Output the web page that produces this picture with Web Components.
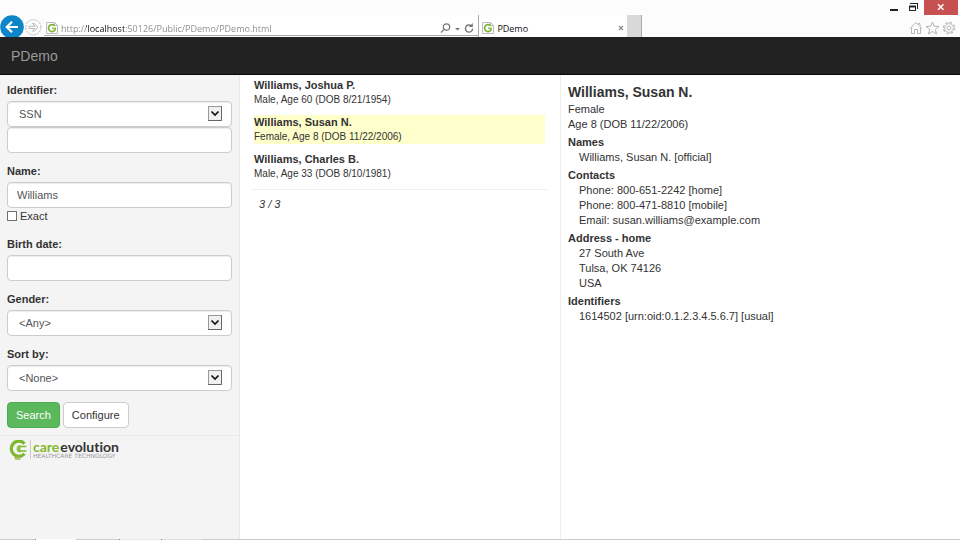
<!DOCTYPE html>
<html lang="en">
<head>
<meta charset="utf-8">
<meta name="viewport" content="width=device-width, initial-scale=1">
<title>PDemo</title>
<style>
  html, body { margin: 0; }
  body { font: 11px/15px "Liberation Sans", Arial, sans-serif; color: #333; background: #fff; }
</style>
</head>
<body>
<demo-app></demo-app>
<script>
function define(name, html) {
  const template = document.createElement('template');
  template.innerHTML = '<style>*,*::before,*::after{box-sizing:border-box}:host{display:block;box-sizing:border-box}</style>' + html;
  customElements.define(name, class extends HTMLElement {
    constructor() {
      super();
      this.attachShadow({ mode: 'open' }).append(template.content.cloneNode(true));
    }
    connectedCallback() {
      const root = this.shadowRoot;
      root.querySelectorAll('[data-text]').forEach(el => {
        el.textContent = this.getAttribute(el.dataset.text) || '';
      });
      const input = root.querySelector('input[data-value]');
      if (input) input.value = this.getAttribute('value') || '';
    }
  });
}

define('site-icon', `
<style>:host{flex:none;width:12px;height:12px}svg{display:block;width:100%;height:100%}</style>
<svg viewBox="0 0 12 12"><path d="M.5.5h8l3 3v8H.5z" fill="#fff" stroke="#bbb"/><path d="M8.5.5v3h3" fill="none" stroke="#bbb"/><path d="M8.6 3.7A3.5 3.5 0 1 0 9.4 7" fill="none" stroke="#7fb434" stroke-width="1.7"/><path d="M6 6.3h4" stroke="#91bd52" stroke-width="1.5"/></svg>`);

define('window-buttons', `
<style>
:host{display:flex;justify-content:flex-end;height:15px}
button{border:0;padding:0;background:none;display:block;height:15px}
svg{display:block}
.min,.max{width:20px}.close{width:34px;background:#c75050;margin-right:2px}
</style>
<button class="min" aria-label="Minimize"><svg width="20" height="15"><path d="M6 10h8" stroke="#222" stroke-width="2"/></svg></button>
<button class="max" aria-label="Restore"><svg width="20" height="15"><path d="M6.500 4V3.500h7v5.500" fill="none" stroke="#222"/><path d="M6 3.500h8" stroke="#222"/><rect x="5.500" y="6.500" width="6" height="4" fill="#fcfcfc" stroke="#222"/><path d="M5 6.500h7" stroke="#222" stroke-width="2"/></svg></button>
<button class="close" aria-label="Close"><svg width="34" height="15"><path d="M14 4.2l5.500 5.500M19.500 4.200L14 9.700" stroke="#fff" stroke-width="1.500"/></svg></button>`);

define('browser-bar', `
<style>
:host{background:#fcfcfc;font-family:"Open Sans","Noto Sans",sans-serif;font-size:9px}
window-buttons{height:15px}
.row{display:flex;height:22px;align-items:stretch}
button{border:0;padding:0;background:none;display:block;flex:none}
svg{display:block}
.row .back{width:24px}.back svg{margin-top:-4px}
.fwd{width:20px}
.address{flex:435 1 0;min-width:0;display:flex;align-items:center;background:#fff;border-bottom:1px solid #aaa;margin-bottom:1px;padding:6px 2px 0}
.address site-icon{margin-right:3px}
input{flex:1;min-width:0;border:0;outline:0;padding:0;height:14px;font:inherit;
  color:transparent;background:linear-gradient(90deg,#8a8a8a 25px,#111 25px 63px,#8a8a8a 63px);-webkit-background-clip:text;background-clip:text}
.tab{flex:0 0 149px;display:flex;align-items:center;gap:3px;padding:4px 0 0 3px;background:#fff;border-left:1px solid #aaa;color:#111}
.tab a{flex:1;color:inherit;text-decoration:none}
.newtab{width:15px;background:#d9d9d9;border-right:1px solid #aaa}
.tools{flex:317 1 0;display:flex;justify-content:flex-end;align-items:center;gap:2px;padding:4px 4px 0 0}
</style>
<window-buttons></window-buttons>
<div class="row">
  <button class="back" aria-label="Back"><svg width="24" height="26" viewBox="0 0 24 26"><circle cx="12" cy="16" r="11.8" fill="#0d86c8"/><path d="M18 16H7M12 10.800L6.800 16l5.200 5.200" fill="none" stroke="#fff" stroke-width="2.200"/></svg></button>
  <button class="fwd" aria-label="Forward"><svg width="20" height="22"><g fill="none" stroke="#b9b9b9"><circle cx="9.300" cy="12.300" r="7.600" stroke-dasharray="2 1"/><path d="M5 11.200h6.200L8.500 8.500h1.700L14 12.300l-3.800 3.800H8.500l2.700-2.700H5z"/></g></svg></button>
  <div class="address">
    <site-icon></site-icon>
    <input type="text" aria-label="Address" value="http://localhost:50126/Public/PDemo/PDemo.html">
    <button aria-label="Search"><svg width="12" height="14"><g fill="none" stroke="#777" stroke-width="1.200"><circle cx="6.500" cy="6" r="3.200"/><path d="M4.200 8.300L1 11.500"/></g></svg></button>
    <button aria-label="Show address suggestions"><svg width="10" height="14"><path d="M3 7h5L5.500 9.500z" fill="#777"/></svg></button>
    <button aria-label="Refresh"><svg width="14" height="14"><path d="M9.200 4.700A3.600 3.600 0 1 0 10.600 7.500" fill="none" stroke="#777" stroke-width="1.400"/><path d="M10.800 2v4H6.800z" fill="#777"/></svg></button>
  </div>
  <div class="tab"><site-icon></site-icon><a href="#">PDemo</a><button aria-label="Close tab"><svg width="10" height="10"><path d="M2 3l4 4M6 3L2 7" stroke="#888" stroke-width="1.100"/></svg></button></div>
  <button class="newtab" aria-label="New tab"></button>
  <div class="tools">
    <button aria-label="Home"><svg width="14" height="14" viewBox="0 0 14 14"><path d="M1 7.500L7 1.500l2.500 2.500V2.500h1.500v3l2 2M2.500 6.500v6h3v-4h3v4h3v-6" fill="none" stroke="#b4b4b4"/></svg></button>
    <button aria-label="Favorites"><svg width="15" height="14" viewBox="0 0 15 14"><path d="M7.500 1l1.700 4.200 4.800.3-3.600 3 1.100 4.500-4-2.500-4 2.500 1.100-4.500-3.600-3 4.800-.3z" fill="none" stroke="#b4b4b4"/></svg></button>
    <button aria-label="Tools"><svg width="14" height="14" viewBox="0 0 14 14"><g fill="none" stroke="#b4b4b4"><circle cx="7" cy="7" r="5.600" stroke-dasharray="2.400 2" stroke-width="1.200"/><circle cx="7" cy="7" r="4.400" stroke-width=".8"/><circle cx="7" cy="7" r="2"/></g></svg></button>
  </div>
</div>`);

define('app-header', `
<style>:host{background:#222;padding:10px 11px 9px;border-bottom:1px solid #080808}
a{display:block;color:#999;font-size:14px;line-height:18px;text-decoration:none}</style>
<a href="#"><slot></slot></a>`);

const controlCss = `
label{display:block;font-weight:bold;margin-bottom:3px}
input,select{display:block;width:100%;height:26px;margin:0;border:1px solid #ccc;border-radius:4px;background:#fff;color:#555;font:inherit;padding:0 9px;outline:0;box-shadow:inset 0 1px 1px rgba(0,0,0,.075)}`;

define('select-box', `
<style>${controlCss}
.box{display:grid}
select,.box svg{grid-area:1/1}
select{appearance:none;padding-left:11px}
.box svg{justify-self:end;align-self:center;margin:0 10px 1px 0;pointer-events:none}</style>
<label for="s" data-text="label"></label>
<div class="box"><select id="s"><option data-text="value"></option></select>
<svg width="14" height="15"><rect x=".5" y=".5" width="13" height="14" fill="#f0f0f0" stroke="#999"/><path d="M0 14.500h13.500V0" fill="none" stroke="#666"/><path d="M3.500 5.500L7 9l3.500-3.500" fill="none" stroke="#111" stroke-width="1.700"/></svg></div>`);

define('text-box', `
<style>${controlCss}</style>
<label for="t" data-text="label"></label><input id="t" type="text" data-value>`);

define('plain-box', `
<style>${controlCss}</style>
<input type="text" aria-label="Identifier value">`);

define('check-box', `
<style>:host{padding-bottom:1px}
label{display:flex;align-items:center;gap:3px;height:17px}
input{appearance:none;width:10px;height:10px;margin:0 0 2px;border:1px solid #707070;background:#fff}
input:checked{background:#555}</style>
<label><input type="checkbox"><span><slot></slot></span></label>`);

define('action-button', `
<style>
button{height:26px;padding:0 8px;border:1px solid #ccc;border-radius:4px;background:#fff;color:#333;font:inherit;display:block}
:host([primary]) button{background:#5cb85c;border-color:#4cae4c;color:#fff}</style>
<button type="button"><slot></slot></button>`);

define('brand-logo', `
<style>:host{display:flex;padding:4px 8px;font-family:Lato,sans-serif}
svg{display:block;flex:none}
.words{border-left:1px solid #ccc;margin:0 0 3px 3px;padding-left:2px;white-space:nowrap}
.name{display:flex;gap:1px;font-size:14px;line-height:13px;font-weight:bold;color:#333;font-variant-ligatures:none}
.care{color:#82b82e}
.sub{font:6px/6px "DejaVu Sans",sans-serif;color:#999}</style>
<svg width="19" height="22" viewBox="0 0 19 22" aria-hidden="true">
<path d="M16.500 3.600A7.600 7.600 0 1 0 16.500 13.800" fill="none" stroke="#7fb72f" stroke-width="3.200"/>
<path d="M11.500 6.500h6.800M11.500 11h6.800" stroke="#7fb72f" stroke-width="1.700"/><path d="M12.500 4.900v7.700a3.850 3.850 0 0 1 0-7.700z" fill="#8cc03e"/>
<path d="M6.500 17.200h7M7 19h5.500" stroke="#8fbd4a" stroke-width="1.500"/></svg>
<div class="words"><div class="name"><span class="care">care</span><span>evolution</span></div><div class="sub">HEALTHCARE TECHNOLOGY</div></div>`);

define('search-panel', `
<style>:host{background:#f4f4f4;border-right:1px solid #e8e8e8}
form{display:flex;flex-direction:column;gap:11px;padding:8px 7px 7px}
.actions{display:flex;gap:3px}
footer{border-top:1px solid #eaeaea}</style>
<form>
  <div><select-box label="Identifier:" value="SSN"></select-box><plain-box></plain-box></div>
  <div><text-box label="Name:" value="Williams"></text-box><check-box>Exact</check-box></div>
  <text-box label="Birth date:"></text-box>
  <select-box label="Gender:" value="&lt;Any&gt;"></select-box>
  <select-box label="Sort by:" value="&lt;None&gt;"></select-box>
  <div class="actions"><action-button primary>Search</action-button><action-button>Configure</action-button></div>
</form>
<footer><brand-logo></brand-logo></footer>`);

define('patient-row', `
<style>:host{margin:0 3px 8px}:host([selected]){background:#ffc}
strong{display:block;line-height:15px}span{display:block;font-size:10px;line-height:14px}</style>
<strong data-text="name"></strong><span><slot></slot></span>`);

define('patient-list', `
<style>:host{padding:3px 12px 0 11px}
footer{border-top:1px solid #eee;padding:7px 8px;font-style:italic}</style>
<slot></slot><footer><slot name="count"></slot></footer>`);

define('detail-group', `
<style>:host{margin-top:3px}h3{margin:0;font:inherit;font-weight:bold}div{padding-left:11px}
::slotted(p){margin:0}</style>
<h3 data-text="heading"></h3><div><slot></slot></div>`);

define('patient-detail', `
<style>:host{padding:7px;border-left:1px solid #eee}h2{margin:0;font-size:14px;line-height:20px}p{margin:0}</style>
<h2>Williams, Susan N.</h2><p>Female</p><p>Age 8 (DOB 11/22/2006)</p>
<detail-group heading="Names"><p>Williams, Susan N. [official]</p></detail-group>
<detail-group heading="Contacts"><p>Phone: 800-651-2242 [home]</p><p>Phone: 800-471-8810 [mobile]</p><p>Email: susan.williams@example.com</p></detail-group>
<detail-group heading="Address - home"><p>27 South Ave</p><p>Tulsa, OK 74126</p><p>USA</p></detail-group>
<detail-group heading="Identifiers"><p>1614502 [urn:oid:0.1.2.3.4.5.6.7] [usual]</p></detail-group>`);

define('demo-app', `
<style>:host{display:flex;flex-direction:column;min-height:100vh}
main{flex:1;display:grid;grid-template-columns:3fr 4fr 5fr}
main>*{min-width:0}
.edge{height:1px;background:linear-gradient(90deg,#ccc 35px,#888 35px 36px,#fff 36px 76px,#ccc 76px 119px,#888 119px 120px,#e8e8e8 120px 161px,#888 161px 162px,#ddd 162px 202px,#ccc 202px)}</style>
<browser-bar></browser-bar>
<app-header>PDemo</app-header>
<main>
  <search-panel></search-panel>
  <patient-list>
    <patient-row name="Williams, Joshua P.">Male, Age 60 (DOB 8/21/1954)</patient-row>
    <patient-row name="Williams, Susan N." selected>Female, Age 8 (DOB 11/22/2006)</patient-row>
    <patient-row name="Williams, Charles B.">Male, Age 33 (DOB 8/10/1981)</patient-row>
    <span slot="count">3 / 3</span>
  </patient-list>
  <patient-detail></patient-detail>
</main>
<div class="edge"></div>`);
</script>
</body>
</html>
